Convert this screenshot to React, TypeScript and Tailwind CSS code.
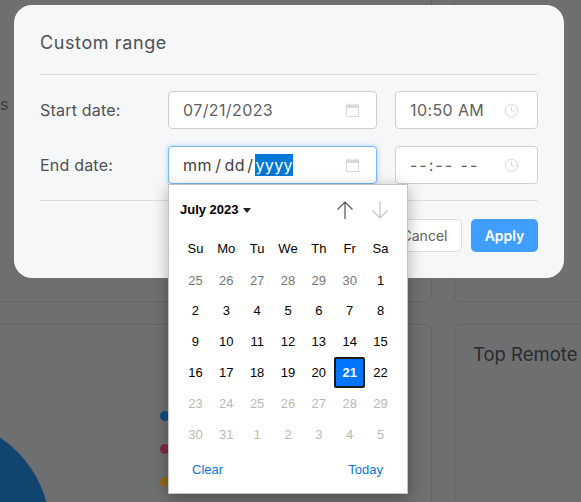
import React from "react";
import { Clock } from "lucide-react";

const days: [string, string][] = [
  ["25","g"],["26","g"],["27","g"],["28","g"],["29","g"],["30","g"],["1","b"],
  ["2","b"],["3","b"],["4","b"],["5","b"],["6","b"],["7","b"],["8","b"],
  ["9","b"],["10","b"],["11","b"],["12","b"],["13","b"],["14","b"],["15","b"],
  ["16","b"],["17","b"],["18","b"],["19","b"],["20","b"],["21","s"],["22","b"],
  ["23","l"],["24","l"],["25","l"],["26","l"],["27","l"],["28","l"],["29","l"],
  ["30","l"],["31","l"],["1","l"],["2","l"],["3","l"],["4","l"],["5","l"],
];
const week = ["Su","Mo","Tu","We","Th","Fr","Sa"];

function CalIcon() {
  return (
    <svg width="13" height="14" viewBox="0 0 13 14" className="shrink-0 -mr-[1px]">
      <rect x="0.5" y="2" width="12" height="11.5" fill="none" stroke="#d9d9d9" />
      <rect x="0.5" y="2" width="12" height="3" fill="#d9d9d9" />
      <rect x="2.5" y="0.5" width="1.5" height="2" fill="#d9d9d9" />
      <rect x="9" y="0.5" width="1.5" height="2" fill="#d9d9d9" />
    </svg>
  );
}

function Field({ w, focus, children, icon }: { w: string; focus?: boolean; children: React.ReactNode; icon: React.ReactNode }) {
  return (
    <div className={`${w} h-[38px] flex items-center justify-between pl-[14px] pr-[18px] bg-white rounded-[4px] border ${focus ? "border-[#7ab8f5] shadow-[0_0_5px_rgba(64,158,255,0.45)]" : "border-[#cfd0d2]"}`}>
      <div className="flex items-center text-[16px] text-[#5f6062] tracking-[0.4px]">{children}</div>
      {icon}
    </div>
  );
}

export default function App() {
  const clock = <Clock size={15} strokeWidth={1.6} className="text-[#d9d9d9] shrink-0" />;
  return (
    <div className="relative w-[581px] h-[502px] overflow-hidden bg-[#6e6f71] font-['Inter',sans-serif]">
      {/* Dimmed page behind the dialog */}
      <div className="-ml-[40px] -mt-[40px] w-[720px] grid grid-cols-[472px_1fr] grid-rows-[342px_300px] gap-[22px]">
        <div className="rounded-[6px] border border-[#636466]" />
        <div className="rounded-[6px] border border-[#636466]" />
        <div className="rounded-[6px] border border-[#636466]" />
        <div className="rounded-[6px] border border-[#636466] px-[18px] py-[17px] text-[18.5px] text-[#2a2b2c] leading-[24px]">Top Remote</div>
      </div>
      <span className="absolute left-[0px] top-[92px] text-[16px] text-[#3b3c3d]">s</span>
      <div className="absolute left-[-173px] top-[419px] w-[223px] h-[223px] rounded-full bg-[#124470]" />
      <div className="absolute left-[160px] top-[411px] w-[10px] h-[10px] rounded-full bg-[#124c80]" />
      <div className="absolute left-[160px] top-[444px] w-[10px] h-[10px] rounded-full bg-[#7d2a3e]" />
      <div className="absolute left-[160px] top-[477px] w-[10px] h-[10px] rounded-full bg-[#8f6a14]" />

      {/* Dialog */}
      <div className="absolute left-[14px] top-[5px] w-[550px] h-[273px] bg-[#f6f7f9] rounded-[18px] px-[26px] pt-[25px]">
        <div className="text-[18px] tracking-[0.6px] leading-[26px] text-[#505153] pb-[18px] border-b border-[#dcdde0]">Custom range</div>
        <div className="flex items-center mt-[16px]">
          <div className="w-[128px] text-[16px] tracking-[0.2px] text-[#505153]">Start date:</div>
          <Field w="w-[209px]" icon={<CalIcon />}>07/21/2023</Field>
          <div className="w-[18px]" />
          <Field w="w-[143px]" icon={clock}>10:50&nbsp;AM</Field>
        </div>
        <div className="flex items-center mt-[17px]">
          <div className="w-[128px] text-[16px] tracking-[0.2px] text-[#505153]">End date:</div>
          <Field w="w-[209px]" focus icon={<CalIcon />}>
            <span className="text-[#3f4042] tracking-[0.6px]">mm</span>
            <span className="text-[#3f4042] px-[3px]">/</span>
            <span className="text-[#3f4042] tracking-[0.6px]">dd</span>
            <span className="text-[#3f4042] px-[2px]">/</span>
            <span className="bg-[#0078d7] text-white h-[22px] leading-[22px]">yyyy</span>
          </Field>
          <div className="w-[18px]" />
          <Field w="w-[143px]" icon={clock}><span className="tracking-[2px]">--:--&nbsp;--</span></Field>
        </div>
        <div className="mt-[16px] border-t border-[#dcdde0] pt-[18px] flex justify-end gap-[9px]">
          <button className="w-[75px] h-[33px] rounded-[5px] border border-[#dcdde0] bg-white text-[14px] text-[#5f6062]">Cancel</button>
          <button className="w-[67px] h-[33px] rounded-[5px] bg-[#409eff] text-[14px] font-semibold text-white">Apply</button>
        </div>
      </div>

      {/* Date popup */}
      <div className="absolute left-[168px] top-[184px] w-[240px] h-[310px] bg-white border border-[#c4c4c4] shadow-[0_4px_14px_rgba(0,0,0,0.3)] font-['Liberation_Sans',sans-serif] px-[11px]">
        <div className="h-[50px] flex items-center justify-between">
          <div className="flex items-center gap-[4px] text-[13px] font-bold text-black">
            July 2023
            <svg width="8" height="5" viewBox="0 0 8 5"><path d="M0 0h8L4 5z" fill="#222" /></svg>
          </div>
          <div className="flex items-center gap-[15px] mr-[6px]">
            <svg width="20" height="20" viewBox="0 0 20 20" fill="none" stroke="#555" strokeWidth="1.2"><path d="M10 19V2M2.5 9.5 10 2l7.5 7.5" /></svg>
            <svg width="20" height="20" viewBox="0 0 20 20" fill="none" stroke="#c4c4c4" strokeWidth="1.2"><path d="M10 1v17M2.5 10.5 10 18l7.5-7.5" /></svg>
          </div>
        </div>
        <div className="grid grid-cols-7 w-[216px] text-[13px] text-center">
          {week.map((d) => (
            <div key={d} className="h-[27px] leading-[27px] text-black">{d}</div>
          ))}
          <div className="col-span-7 h-[3px]" />
          {days.map(([d, k], i) => (
            <div
              key={i}
              className={`h-[30.8px] flex items-center justify-center ${k === "g" ? "text-[#767676]" : k === "l" ? "text-[#b9b9b9]" : k === "s" ? "" : "text-black"}`}
            >
              {k === "s" ? (
                <span className="w-[31px] h-[31px] flex items-center justify-center bg-[#0075ff] border-2 border-[#1c1c1c] rounded-[2px] text-white font-bold">{d}</span>
              ) : d}
            </div>
          ))}
        </div>
        <div className="flex justify-between pl-[12px] pr-[13px] mt-[8px] text-[13px] text-[#0a76dc] leading-[24px]">
          <span>Clear</span>
          <span>Today</span>
        </div>
      </div>
    </div>
  );
}
